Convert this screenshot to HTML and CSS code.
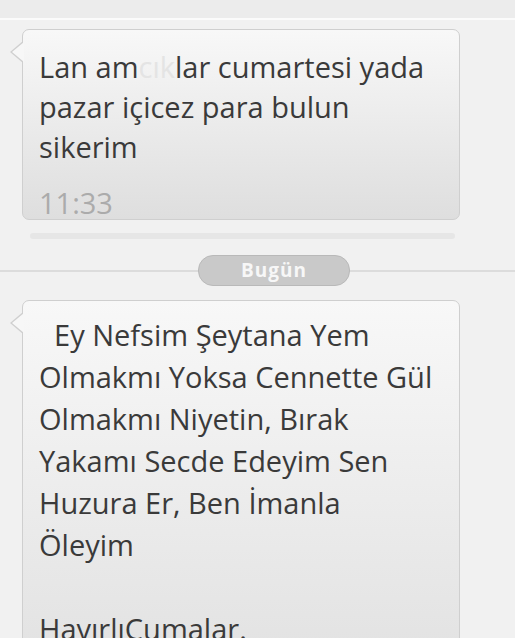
FILE: index.html
```html
<!DOCTYPE html>
<html lang="tr">
<head>
  <meta charset="UTF-8">
  <title>Mesajlar</title>
  <link rel="stylesheet" href="styles.css">
</head>
<body>

<div class="top-strip"></div>

<div class="thread">
  <div class="message">
    <div class="bubble">
      <p class="text">Lan am<span class="smudge">cık</span>lar cumartesi yada pazar içicez para bulun sikerim</p>
      <div class="time">11:33</div>
    </div>
  </div>

  <div class="shadow-line"></div>

  <div class="date-divider">
    <span class="date-pill">Bugün</span>
  </div>

  <div class="message">
    <div class="bubble bubble-long">
      <p class="text text-wide">&nbsp; Ey Nefsim Şeytana Yem Olmakmı Yoksa Cennette Gül Olmakmı Niyetin, Bırak Yakamı Secde Edeyim Sen Huzura Er, Ben İmanla Öleyim<br><br>HayırlıCumalar.</p>
    </div>
  </div>
</div>

</body>
</html>
```

FILE: styles.css
```css
body {
  margin: 0;
  font-family: 'Open Sans', Roboto, sans-serif;
  background-color: #f1f1f1;
  height: 638px;
  overflow: hidden;
}

.top-strip {
  height: 18px;
  background-color: #ececec;
  border-bottom: 2px solid #fbfbfb;
}

.thread {
  padding: 9px 0 0;
}

.message {
  padding: 0 55px 0 22px;
}

.bubble {
  position: relative;
  background: linear-gradient(#f8f8f8, #dedede);
  border: 1px solid #cfcfcf;
  border-radius: 7px;
  padding: 17px 20px 0 16px;
}

.bubble-long {
  padding: 13px 20px 80px 16px;
}

.bubble::before {
  content: "";
  position: absolute;
  left: -13px;
  top: 11px;
  width: 0;
  height: 0;
  border-top: 11px solid transparent;
  border-bottom: 11px solid transparent;
  border-right: 13px solid #cfcfcf;
}

.bubble::after {
  content: "";
  position: absolute;
  left: -11px;
  top: 12px;
  width: 0;
  height: 0;
  border-top: 10px solid transparent;
  border-bottom: 10px solid transparent;
  border-right: 12px solid #f7f7f7;
}

.text {
  margin: 0;
  font-size: 29px;
  line-height: 40px;
  color: #3a3a3a;
}

.text-wide {
  line-height: 42px;
}

.smudge {
  color: #e4e4e4;
}

.time {
  font-size: 29px;
  line-height: 32px;
  color: #ababab;
  margin-top: 20px;
}

.shadow-line {
  height: 6px;
  margin: 13px 60px 0 30px;
  border-radius: 3px;
  background-color: #e6e6e6;
}

.date-divider {
  display: flex;
  align-items: center;
  padding-left: 198px;
  margin: 16px 0 14px;
  background: linear-gradient(transparent 15px, #dcdcdc 15px, #dcdcdc 17px, transparent 17px);
}

.date-pill {
  width: 150px;
  height: 29px;
  line-height: 29px;
  text-align: center;
  border-radius: 15px;
  background-color: #c9c9c9;
  border: 1px solid #b9b9b9;
  color: #f7f7f7;
  font-size: 19px;
  letter-spacing: 1px;
  font-weight: bold;
}
```
